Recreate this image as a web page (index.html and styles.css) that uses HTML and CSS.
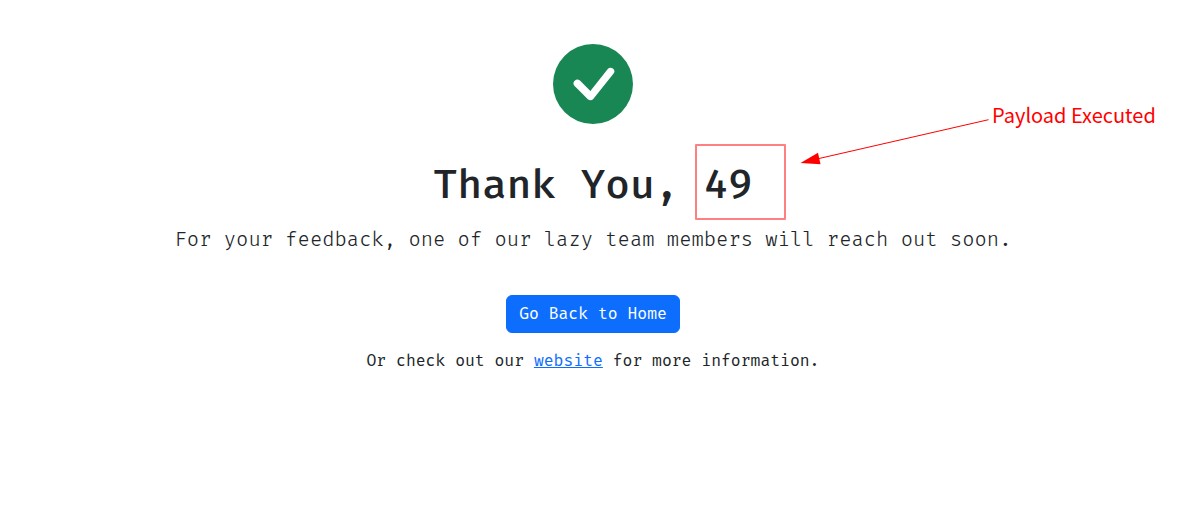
FILE: index.html
```html
<!DOCTYPE html>
<html lang="en">
<head>
<meta charset="utf-8">
<meta name="viewport" content="width=device-width, initial-scale=1">
<title>Thank You</title>
<link rel="stylesheet" href="styles.css">
</head>
<body>
<main class="thanks">
  <svg class="check" viewBox="0 0 16 16" aria-hidden="true">
    <path d="M16 8A8 8 0 1 1 0 8a8 8 0 0 1 16 0zm-3.97-3.030a.75.75 0 0 0-1.080.022L7.477 9.417 5.384 7.323a.75.75 0 0 0-1.060 1.060L6.970 11.030a.75.75 0 0 0 1.079-.020l3.992-4.990a.75.75 0 0 0-.010-1.050z"/>
  </svg>
  <h1 class="title">Thank You, 49</h1>
  <p class="lead">For your feedback, one of our lazy team members will reach out soon.</p>
  <button class="home" type="button">Go Back to Home</button>
  <p class="more">Or check out our <a class="link" href="#">website</a> for more information.</p>
  <div class="note">
    <svg class="marks" viewBox="0 0 300 120" aria-hidden="true">
      <rect class="frame" x="3" y="45" width="89" height="74"/>
      <path class="line" d="M295.500 19.700L126 58.500"/>
      <path class="tip" d="M107.500 63L125 52.800L127.500 64.200Z"/>
    </svg>
    <span class="label">Payload Executed</span>
  </div>
</main>
</body>
</html>
```
FILE: styles.css
```css
body {
  margin: 0;
  background: #fff;
  color: #212529;
  font: 16px/24px "Fira Code", "DejaVu Sans Mono", monospace;
}

.thanks {
  position: relative;
  display: flex;
  flex-direction: column;
  align-items: center;
  padding: 44px 16px;
  text-align: center;
}

.check {
  width: 80px;
  height: 80px;
  fill: #198754;
}

.title {
  margin: 38px 0 15px;
  font-size: 40px;
  font-weight: 500;
  line-height: 48px;
}

.lead {
  margin: 0 0 40px;
  font-size: 20px;
  font-weight: 300;
  line-height: 30px;
}

.home {
  padding: 6px 12px;
  border: 1px solid #0d6efd;
  border-radius: 6px;
  background: #0d6efd;
  color: #fff;
  font: inherit;
}

.more {
  margin: 16px 0;
}

.link {
  color: #0d6efd;
}

.note {
  position: absolute;
  top: 100px;
  left: 50%;
  margin-left: 100px;
  color: #f00;
  pointer-events: none;
}

.marks {
  display: block;
  width: 300px;
  height: 120px;
}

.frame {
  fill: none;
  stroke: #ff8080;
  stroke-width: 2;
  stroke-linejoin: round;
}

.line {
  fill: none;
  stroke: #f00;
}

.tip {
  fill: #f00;
}

.label {
  position: absolute;
  top: 0;
  left: 299px;
  font-family: "Noto Sans CJK SC", "Noto Sans", sans-serif;
  font-size: 20px;
  line-height: 30px;
  white-space: nowrap;
}
```
